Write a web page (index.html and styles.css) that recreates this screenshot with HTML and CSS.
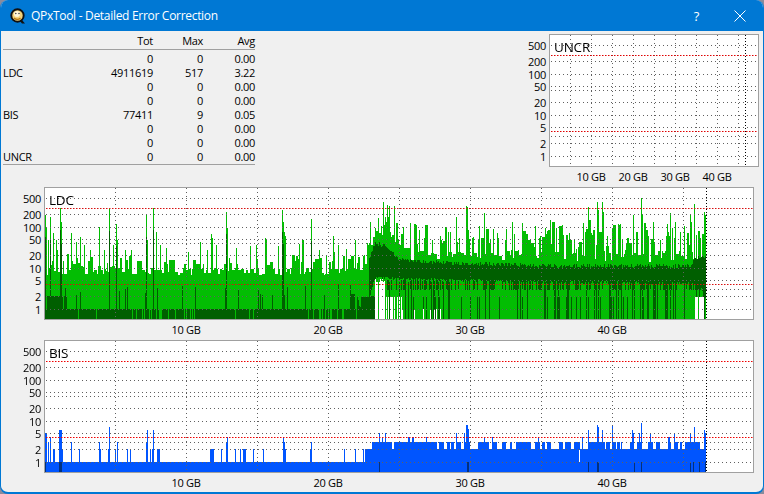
FILE: index.html
```html
<!DOCTYPE html>
<html lang="en">
<head>
<meta charset="utf-8">
<title>QPxTool - Detailed Error Correction</title>
<link rel="stylesheet" href="styles.css">
</head>
<body>
<div class="window">
  <header class="titlebar">
    <svg class="app-icon" width="16" height="16" viewBox="0 0 16 16">
      <path d="M9.500 12.500l2.500 3h3l-3.500-4z" fill="#111"/>
      <circle cx="7.500" cy="7.500" r="6.200" fill="#f3d27a" stroke="#111" stroke-width="1.900"/>
      <circle cx="7" cy="6" r="3" fill="#fff6d8"/>
      <path d="M4 10c1.500 1.800 4.500 1.800 6.500 0" fill="none" stroke="#b87a18" stroke-width="1.300"/>
      <circle cx="5.800" cy="5.500" r=".8" fill="#444"/>
      <circle cx="9" cy="5.500" r=".8" fill="#444"/>
    </svg>
    <span class="title">QPxTool - Detailed Error Correction</span>
    <span class="help">?</span>
    <svg class="close" width="12" height="12" viewBox="0 0 12 12"><path d="M.5.500l11 11M11.500.500l-11 11" stroke="#fff" stroke-width="1" fill="none"/></svg>
  </header>
  <main class="content">
    <section class="top">
      <table class="stats">
        <thead><tr><th></th><th>Tot</th><th>Max</th><th>Avg</th></tr></thead>
        <tbody>
          <tr><td></td><td>0</td><td>0</td><td>0.00</td></tr>
          <tr><td>LDC</td><td>4911619</td><td>517</td><td>3.22</td></tr>
          <tr><td></td><td>0</td><td>0</td><td>0.00</td></tr>
          <tr><td></td><td>0</td><td>0</td><td>0.00</td></tr>
          <tr><td>BIS</td><td>77411</td><td>9</td><td>0.05</td></tr>
          <tr><td></td><td>0</td><td>0</td><td>0.00</td></tr>
          <tr><td></td><td>0</td><td>0</td><td>0.00</td></tr>
          <tr><td>UNCR</td><td>0</td><td>0</td><td>0.00</td></tr>
        </tbody>
      </table>
      <div class="chart small">
        <div class="plot-row">
          <div class="axis">
            <span class="tick v500">500</span><span class="tick v200">200</span><span class="tick v100">100</span><span class="tick v50">50</span><span class="tick v20">20</span><span class="tick v10">10</span><span class="tick v5">5</span><span class="tick v2">2</span><span class="tick v1">1</span>
          </div>
          <div class="plot"><canvas id="uncr" width="208" height="131"></canvas><span class="plot-name">UNCR</span></div>
        </div>
        <div class="xlabels"><span>10 GB</span><span>20 GB</span><span>30 GB</span><span>40 GB</span></div>
      </div>
    </section>
    <section class="chart wide">
      <div class="plot-row">
        <div class="axis">
          <span class="tick v500">500</span><span class="tick v200">200</span><span class="tick v100">100</span><span class="tick v50">50</span><span class="tick v20">20</span><span class="tick v10">10</span><span class="tick v5">5</span><span class="tick v2">2</span><span class="tick v1">1</span>
        </div>
        <div class="plot"><canvas id="ldc" width="708" height="131"></canvas><span class="plot-name">LDC</span></div>
      </div>
      <div class="xlabels"><span>10 GB</span><span>20 GB</span><span>30 GB</span><span>40 GB</span></div>
    </section>
    <section class="chart wide">
      <div class="plot-row">
        <div class="axis">
          <span class="tick v500">500</span><span class="tick v200">200</span><span class="tick v100">100</span><span class="tick v50">50</span><span class="tick v20">20</span><span class="tick v10">10</span><span class="tick v5">5</span><span class="tick v2">2</span><span class="tick v1">1</span>
        </div>
        <div class="plot"><canvas id="bis" width="708" height="131"></canvas><span class="plot-name">BIS</span></div>
      </div>
      <div class="xlabels"><span>10 GB</span><span>20 GB</span><span>30 GB</span><span>40 GB</span></div>
    </section>
  </main>
</div>
<script src="charts.js"></script>
</body>
</html>
```
FILE: styles.css
```css
* { box-sizing: border-box; }
html, body { margin: 0; height: 100%; background: #8b8b9c; overflow: hidden; }
body { font: 11px/14px "Open Sans", "Noto Sans", sans-serif; letter-spacing: -0.3px; color: #000; }
.window {
  width: 764px; height: 494px; display: flex; flex-direction: column;
  background: #f0f0f0; border: solid #0078d4; border-width: 0 1px 2px 1px;
  border-radius: 8px; overflow: hidden;
}
.titlebar {
  flex: none; height: 31px; margin: 0 -1px; background: #0078d4; color: #fff;
  display: flex; align-items: center; padding-left: 10px;
}
.app-icon { flex: none; margin-right: 5px; margin-top: 1px; }
.title { font-size: 12px; flex: 1; }
.help { font-size: 13px; margin-right: 35px; }
.close { margin-right: 18px; }

.content { flex: 1; display: flex; flex-direction: column; padding-top: 3px; }
.top { display: flex; justify-content: space-between; align-items: flex-start; padding-left: 2px; padding-right: 4px; }

.stats { width: 252px; border-collapse: collapse; table-layout: fixed; border-bottom: 1px solid #a0a0a0; }
.stats th, .stats td { padding: 0; height: 14px; font-weight: 400; text-align: right; white-space: nowrap; }
.stats th { height: 15px; border-bottom: 1px solid #a0a0a0; }
.stats tbody tr:first-child td { height: 17px; vertical-align: bottom; }
.stats td:first-child, .stats th:first-child { width: 60px; text-align: left; }
.stats th:nth-child(2) { width: 90px; }
.stats th:nth-child(3) { width: 50px; }
.stats th:nth-child(4) { width: 52px; }

.plot-row { display: flex; }
.axis { position: relative; flex: none; }
.tick { position: absolute; right: 3px; transform: translateY(-50%); }
.v500 { top: 12px; } .v200 { top: 28px; } .v100 { top: 41px; } .v50 { top: 53px; } .v20 { top: 69px; }
.v10 { top: 82px; } .v5 { top: 94px; } .v2 { top: 110px; } .v1 { top: 123px; }

.plot { position: relative; flex: none; border: 1px solid #a0a0a0; background: #fff; height: 133px; }
.plot canvas { display: block; }
.plot-name { position: absolute; left: 4px; top: 4px; font-size: 13.500px; line-height: 16px; letter-spacing: -0.2px; }

.xlabels { display: flex; height: 20px; align-items: center; }
.xlabels span { flex: none; text-align: center; }

.wide .axis { width: 43px; }
.wide .plot { width: 710px; }
.wide .xlabels { padding-left: 114px; }
.wide .xlabels span { width: 142px; }

.small .axis { width: 29px; }
.small .plot { width: 210px; }
.small .xlabels { padding-left: 50px; }
.small .xlabels span { width: 42px; }
```
FILE: charts.js
```javascript
(function () {
  var seed = 12345;
  function rnd() { seed = (seed * 1664525 + 1013904223) >>> 0; return seed / 4294967296; }
  function interp(pts, x) {
    for (var i = 1; i < pts.length; i++) {
      if (x <= pts[i][0]) {
        var a = pts[i - 1], b = pts[i];
        return a[1] + (b[1] - a[1]) * (x - a[0]) / (b[0] - a[0]);
      }
    }
    return pts[pts.length - 1][1];
  }
  var ROWS = [11, 27, 40, 52, 56, 68, 81, 93, 102, 109, 122];
  var REDS = [21, 97];

  function grid(ctx, left, w, verts, black, red) {
    ctx.fillStyle = '#606060';
    ROWS.forEach(function (r) {
      for (var x = 1; x < w; x += 4) ctx.fillRect(x, r - 1, 1, 1);
    });
    verts.forEach(function (v) {
      for (var y = 0; y < 131; y += 4) ctx.fillRect(v - left, y, 1, 1);
    });
    ctx.fillStyle = '#000';
    for (var y = 0; y < 131; y += 3) ctx.fillRect(black - left, y, 1, 1);
    REDS.forEach(function (r) {
      for (var x = 1; x < w; x += 3) {
        ctx.fillStyle = red;
        ctx.fillRect(x, r - 1, 1, 1);
        ctx.globalAlpha = 0.5;
        ctx.fillRect(x + 1, r - 1, 1, 1);
        ctx.globalAlpha = 1;
      }
    });
  }
  function steps(start, step, n) { var a = []; for (var i = 0; i < n; i++) a.push(start + i * step); return a; }

  /* LDC */
  var c = document.getElementById('ldc').getContext('2d');
  var T = 188, L = 45, BOT = 319;
  var spikes = [[45,215],[46,228],[48,240],[50,217],[53,233],[56,240],[60,208],[61,222],[71,233],[76,242],[80,237],[84,245],[90,250],[99,227],[104,250],[109,209],[113,245],[116,224],[117,240],[125,250],[131,250],[146,215],[147,240],[153,208],[156,232],[160,245],[166,248],[188,252],[200,242],[207,250],[211,234],[212,238],[216,245],[226,212],[227,228],[236,248],[250,246],[256,245],[265,238],[266,240],[278,246],[282,210],[283,222],[284,232],[285,236],[294,255],[299,244],[302,239],[303,240],[311,219],[319,250],[333,236],[334,252],[338,245],[346,249],[355,240],[364,255],[368,245],[370,222],[375,228],[378,218],[381,226],[385,217],[386,222],[390,232],[398,240],[410,223],[416,225],[424,238],[432,240],[440,236],[450,232],[456,217],[459,238],[466,206],[467,207],[472,238],[478,240],[484,213],[490,240],[498,238],[505,240],[512,222],[514,234],[522,223],[528,240],[535,226],[540,236],[546,234],[550,220],[556,228],[562,225],[568,240],[574,240],[583,223],[585,232],[588,207],[592,235],[597,202],[598,210],[602,202],[603,212],[607,236],[612,228],[619,225],[622,240],[633,215],[636,232],[641,198],[642,214],[648,236],[653,222],[660,240],[666,236],[670,213],[672,228],[675,222],[680,232],[684,226],[690,215],[691,222],[694,204],[696,235],[700,238],[704,212],[705,215]];
  var spikeMap = {};
  spikes.forEach(function (s) { spikeMap[s[0]] = s[1]; });
  var bandTop = [[369,258],[375,243],[385,246],[392,252],[400,260],[450,263],[550,266],[690,266],[695,258],[705,256]];
  var bandBot = [[369,300],[373,282],[376,278],[392,278],[400,279],[450,280],[550,282],[690,283],[700,285],[705,298]];
  var lightEnv = [[365,268],[370,250],[376,234],[390,238],[400,248],[410,256],[705,256]];

  function seg(color, x, y0, y1) { if (y1 > y0) { c.fillStyle = color; c.fillRect(x - L, y0 - T, 1, y1 - y0); } }
  var LIGHT = '#03bd03', DARK = '#005f00';
  var run = 0, runTop = 270;
  for (var x = L; x <= 705; x++) {
    if (run <= 0) {
      run = 1 + Math.floor(rnd() * 3);
      var r = rnd();
      if (x < 365) {
        runTop = 275 - rnd() * 7;
        if (r < 0.42) runTop = 255 + rnd() * 15;
        if (x < 70 && rnd() < 0.5) runTop = 248 + rnd() * 18;
      } else {
        runTop = interp(lightEnv, x) - rnd() * 6;
        if (r < 0.42) runTop -= 6 + rnd() * 26;
        else if (r > 0.8 && x > 400) runTop += 3 + rnd() * 5;
      }
    }
    run--;
    var top = spikeMap[x] || Math.round(runTop);
    seg(LIGHT, x, top, BOT);

    if (x < 356) {
      var gap = 0.04;
      if (x > 140 && x < 165) gap = 0.3;
      if (x > 172 && x < 195) gap = 0.3;
      if (x > 312) gap = 0.3;
      if (rnd() > gap) seg(DARK, x, 309, BOT);
      if (x < 67 && rnd() > 0.1) seg(DARK, x, 296, BOT);
      if (rnd() < 0.05) seg(DARK, x, 296 - Math.round(rnd() * 12), BOT);
      if (spikeMap[x] && spikeMap[x] < 225) seg(DARK, x, spikeMap[x] + 22, BOT);
      if (x > 350 && rnd() < 0.8) seg(DARK, x, 294, BOT);
    } else if (x < 369) {
      if (x >= 361) seg(DARK, x, 297, BOT); else if (rnd() < 0.7) seg(DARK, x, Math.round(297 + rnd() * 12), BOT);
    } else {
      seg(DARK, x, Math.round(interp(bandTop, x) + (rnd() - 0.5) * 4), Math.round(interp(bandBot, x) + (rnd() - 0.5) * 3));
      if (x < 375) seg(DARK, x, 296, BOT);
      if (x >= 375 && x < 385) {
        if (rnd() < 0.8) seg('#fff', x, 278 + Math.round(rnd() * 6), BOT);
      } else if (x >= 386) {
        if (rnd() < 0.45) seg(DARK, x, 280, 290);
        if (rnd() < 0.17) seg(DARK, x, 282, BOT);
        else if (rnd() < 0.1) seg(DARK, x, 297, BOT);
        if (x < 402 && rnd() < 0.4) seg('#fff', x, 297, BOT);
        else if (x >= 402 && x < 450 && rnd() < 0.07) seg('#fff', x, 309, BOT);
        else if (x >= 695 && x < 704 && rnd() < 0.7) seg('#fff', x, 297, BOT);
      }
    }
  }
  grid(c, L, 708, steps(115, 71, 9), 706, '#d81010');

  /* BIS */
  var b = document.getElementById('bis').getContext('2d');
  var T2 = 341, BOT2 = 472, BLUE = '#0055ff', NAVY = '#00307f';
  function bseg(color, x, y0, y1) { b.fillStyle = color; b.fillRect(x - L, y0 - T2, 1, y1 - y0); }
  var bs = {45:433,46:433,48:442,50:437,53:449,54:449,59:430,60:430,61:430,62:449,71:442,79:449,99:442,100:449,108:449,109:427,115:449,117:442,127:449,130:449,146:442,147:430,150:449,152:449,153:430,157:449,158:449,159:449,210:449,211:449,212:449,213:449,221:449,226:442,227:437,235:449,240:449,243:449,244:449,245:449,253:449,263:449,283:437,284:442,285:449,310:449,311:442,344:449,355:449,363:449};
  var bs2 = {379:433,385:433,382:437,426:437,408:437,409:437,412:437,413:437,456:433,464:433,466:425,467:425,468:429,484:437,492:437,538:437,582:437,588:430,597:425,598:427,602:430,612:425,632:430,633:433,639:433,641:423,650:433,674:433,690:433,694:427,704:430,705:433,668:437,669:437};
  var brun = 0, btop = 449;
  for (x = L; x <= 705; x++) {
    var t = 462;
    if (x >= 365) t = 449;
    if (x < 365 && bs[x]) t = bs[x];
    if (x >= 372) {
      if (brun <= 0) { brun = 1 + Math.floor(rnd() * 4); btop = rnd() < 0.55 ? 442 : 449; }
      brun--;
      t = x < 388 ? 442 : btop;
    }
    if (bs2[x]) t = bs2[x];
    bseg(BLUE, x, t, BOT2);
  }
  bseg('#fff', 579, 450, 462);
  [45,59,60,61,379,467,468,588,597,598,634,641,690,693,699,705].forEach(function (x) { bseg(NAVY, x, 462, BOT2); });
  grid(b, L, 708, steps(115, 71, 9), 706, '#f00000');

  /* UNCR */
  var u = document.getElementById('uncr').getContext('2d');
  grid(u, 550, 208, steps(570, 21, 9), 745, '#e00000');
})();
```
